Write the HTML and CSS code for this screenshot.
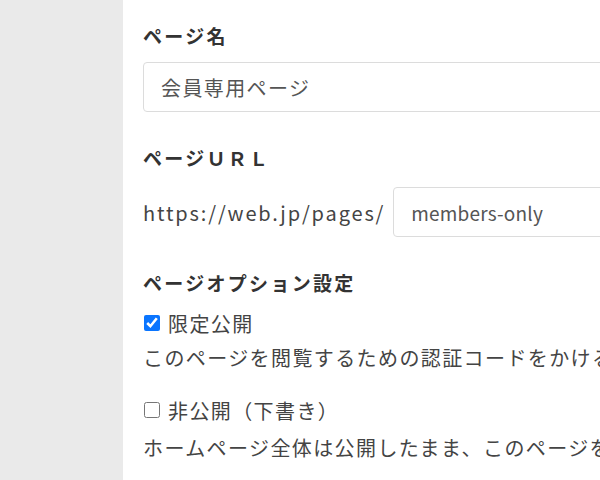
FILE: index.html
```html
<!DOCTYPE html>
<html lang="ja">
<head>
<meta charset="utf-8">
<link rel="stylesheet" href="styles.css">
</head>
<body>
<div class="layout">
  <aside class="sidebar"></aside>
  <main class="main">
    <section class="field field-name">
      <h2 class="label">ページ名</h2>
      <input class="text-input wide" type="text" value="会員専用ページ">
    </section>
    <section class="field field-url">
      <h2 class="label">ページＵＲＬ</h2>
      <div class="url-row">
        <span class="url-prefix">https://web.jp/pages/</span>
        <input class="text-input slug" type="text" value="members-only">
      </div>
    </section>
    <section class="field field-options">
      <h2 class="label">ページオプション設定</h2>
      <label class="option first">
        <input type="checkbox" class="check" checked>
        <span>限定公開</span>
      </label>
      <p class="desc">このページを閲覧するための認証コードをかけることができます。</p>
      <label class="option second">
        <input type="checkbox" class="check">
        <span>非公開（下書き）</span>
      </label>
      <p class="desc last">ホームページ全体は公開したまま、このページを非公開にします。</p>
    </section>
  </main>
</div>
</body>
</html>
```
FILE: styles.css
```css
html, body {
  margin: 0;
  padding: 0;
  background: #ffffff;
  overflow: hidden;
}
body {
  font-family: "Noto Sans CJK JP", "Noto Sans", sans-serif;
  font-size: 20px;
  color: #444;
}
.layout {
  display: flex;
  width: 600px;
  height: 480px;
}
.sidebar {
  flex: 0 0 123px;
  background: #eaeaea;
}
.main {
  flex: 1;
  min-width: 0;
  padding: 21px 0 0 20px;
  overflow: hidden;
}
.field {
  margin: 0;
}
.field + .field {
  margin-top: 31px;
}
.label {
  margin: 0;
  font-size: 19px;
  line-height: 30px;
  font-weight: 700;
  letter-spacing: 2.3px;
  color: #333;
}
.text-input {
  box-sizing: border-box;
  height: 50px;
  border: 1px solid #dcdcdc;
  border-radius: 4px;
  background: #fff;
  font-family: "Noto Sans CJK JP", "Noto Sans", sans-serif;
  font-size: 20px;
  color: #555;
  padding: 0 17px;
  outline: none;
}
.wide {
  display: block;
  width: 600px;
  margin-top: 11px;
  letter-spacing: 1.4px;
}
.url-row {
  display: flex;
  align-items: center;
  gap: 8px;
  margin-top: 14px;
}
.url-prefix {
  letter-spacing: 1.85px;
  color: #444;
  white-space: nowrap;
}
.slug {
  flex: 0 0 300px;
  font-size: 19px;
  letter-spacing: 0.2px;
}
.option {
  display: flex;
  align-items: center;
  gap: 8px;
  height: 30px;
  letter-spacing: 1.4px;
  color: #444;
}
.option.first {
  margin-top: 10px;
}
.option.second {
  margin-top: 22px;
}
.check {
  width: 16px;
  height: 16px;
  margin: 0 0 0 1px;
  accent-color: #0a75ff;
}
.desc {
  margin: 5px 0 0 0;
  line-height: 30px;
  letter-spacing: 1.4px;
  white-space: nowrap;
  color: #444;
}
.desc.last {
  margin-top: 8px;
}
```
